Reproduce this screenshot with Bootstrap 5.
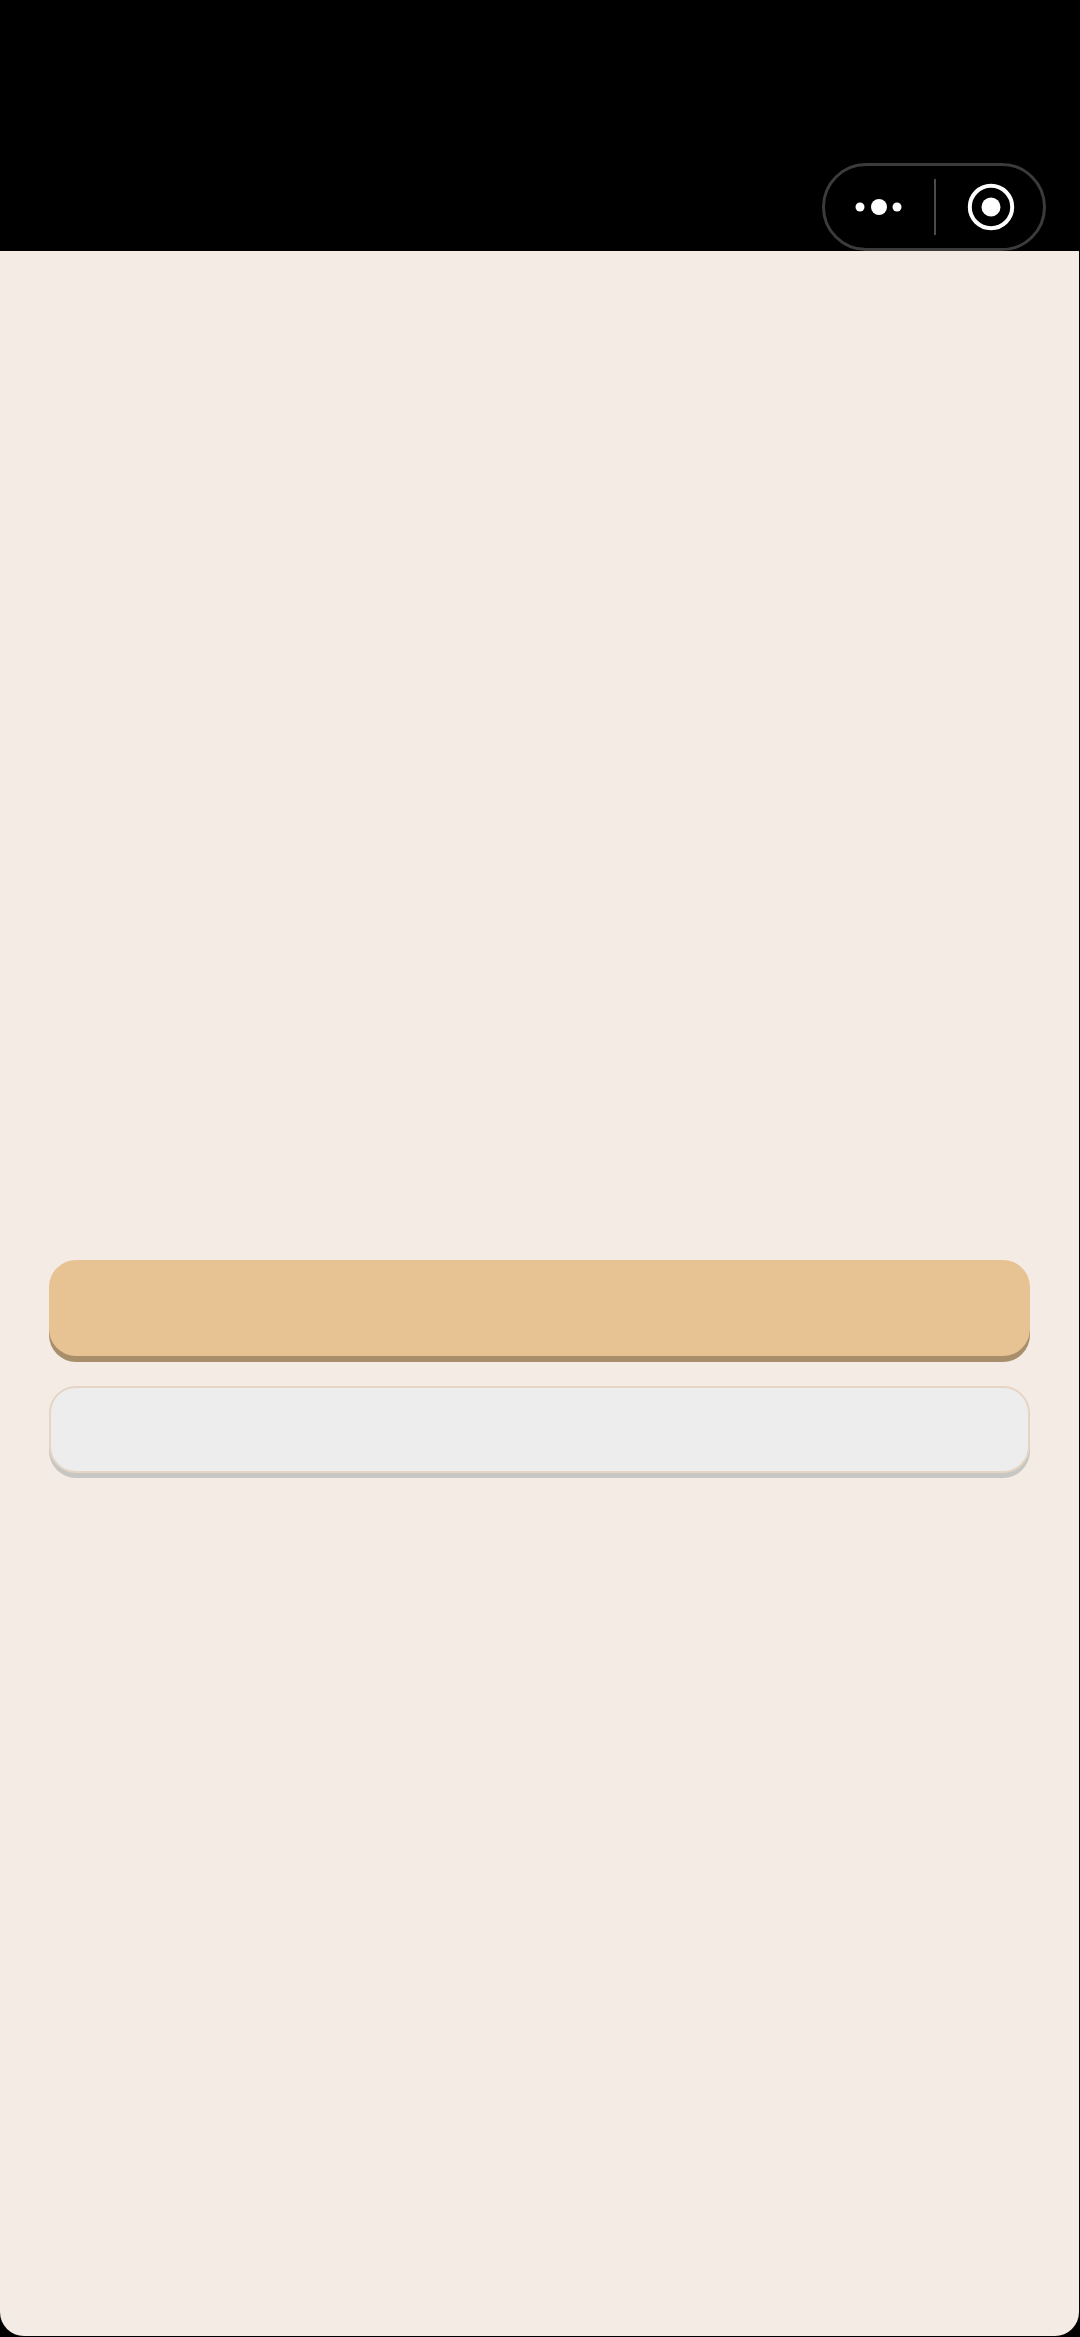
<!DOCTYPE html>
<html lang="zh">
<head>
<meta charset="utf-8">
<title>Page</title>
<link rel="stylesheet" href="https://cdn.jsdelivr.net/npm/bootstrap@5.3.0/dist/css/bootstrap.min.css">
<style>
html, body { height: 100%; margin: 0; background: #000; overflow: hidden; }
.screen-shell { width: 1079px; height: 2336px; }
.top-strip { height: 251px; padding: 0 33px 0 0; }
.capsule-bar { width: 224px; height: 88px; border: 3px solid #3b3b3b; border-radius: 44px; background: #000; }
.capsule-left { width: 109px; }
.capsule-right { width: 107px; padding-left: 3px; }
.capsule-rule { width: 2px; height: 56px; background: #4a4a4a; }
.page-area { background: #f4ebe5; border-radius: 0 0 24px 24px; padding: 1009px 49px 0; gap: 30px; }
.sheet-btn { height: 96px; border-radius: 27px; border: 0; padding: 0; }
.sheet-btn-main { background: #e7c393; box-shadow: 0 6px 0 #a98e6b; }
.sheet-btn-alt { height: 87px; background: #ededed; border: 2px solid #e4d5c4; box-shadow: 0 5px 0 #c6c6c3; }
.sheet-btn-main:hover, .sheet-btn-main:active { background: #e7c393 !important; }
</style>
</head>
<body>
<div class="screen-shell d-flex flex-column">
  <header class="top-strip d-flex justify-content-end align-items-end">
    <div class="capsule-bar d-flex align-items-center">
      <div class="capsule-left d-flex justify-content-center align-items-center">
        <svg width="60" height="20" viewBox="0 0 60 20" aria-hidden="true"><circle cx="10" cy="10" r="4.5" fill="#fff"/><circle cx="29" cy="10" r="8" fill="#fff"/><circle cx="47" cy="10" r="4.5" fill="#fff"/></svg>
      </div>
      <div class="capsule-rule"></div>
      <div class="capsule-right d-flex justify-content-center align-items-center">
        <svg width="48" height="48" viewBox="0 0 48 48" aria-hidden="true"><circle cx="24" cy="24" r="21.2" fill="none" stroke="#fff" stroke-width="4"/><circle cx="24" cy="24" r="9.5" fill="#fff"/></svg>
      </div>
    </div>
  </header>
  <main class="page-area flex-grow-1 d-flex flex-column">
    <button type="button" class="btn sheet-btn sheet-btn-main w-100" aria-label="Primary"></button>
    <button type="button" class="btn sheet-btn sheet-btn-alt w-100" aria-label="Secondary"></button>
  </main>
</div>
<script src="https://cdn.jsdelivr.net/npm/bootstrap@5.3.0/dist/js/bootstrap.bundle.min.js"></script>
</body>
</html>
